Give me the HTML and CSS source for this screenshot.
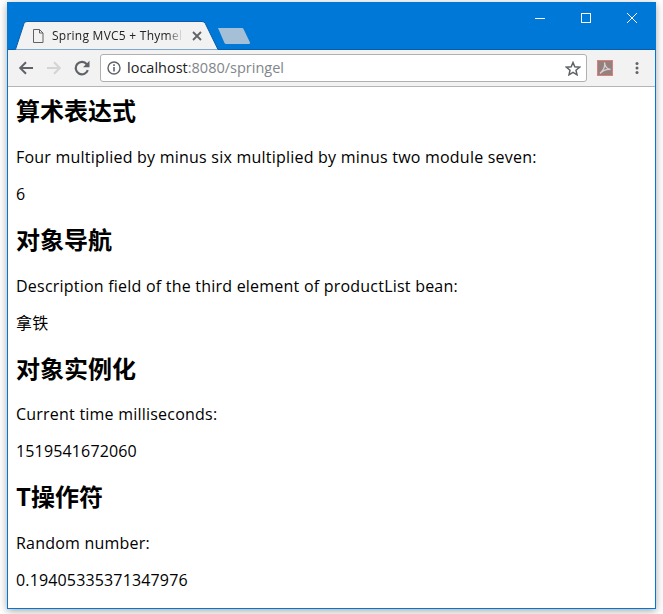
FILE: index.html
```html
<!DOCTYPE html>
<html lang="zh">
<head>
<meta charset="utf-8">
<title>Spring MVC5 + Thymeleaf</title>
<link rel="stylesheet" href="styles.css">
</head>
<body>
<div class="window">
  <div class="titlebar">
    <div class="tab">
      <svg class="tab-bg" width="204" height="29" viewBox="0 0 204 29"><path d="M0.500 28.500L9 2.500Q9.700 .5 12 .5H187Q189.500 .5 190.300 2.500L203 28.500" fill="#f2f2f2" stroke="#0a5da8"/></svg>
      <svg class="page-icon" width="12" height="14" viewBox="0 0 12 14"><path d="M1.500 .5H7.500L11 4V13.500H1.500Z M7.500 .5V4H11" fill="none" stroke="#5f6368"/></svg>
      <span class="tab-title">Spring MVC5 + Thymel</span>
      <svg class="tab-close" width="10" height="10" viewBox="0 0 10 10"><path d="M1 1L9 9M9 1L1 9" stroke="#5f6368" stroke-width="1.800"/></svg>
    </div>
    <svg class="new-tab" width="34" height="18" viewBox="0 0 34 18"><path d="M1 1H25Q26 1 26.500 2L33 15.500Q33 17 32 17H9Q8 17 7.500 16Z" fill="#a5bfd6"/></svg>
    <div class="controls">
      <svg width="12" height="12" viewBox="0 0 12 12"><path d="M1 6.500H11" stroke="#fff"/></svg>
      <svg width="12" height="12" viewBox="0 0 12 12"><rect x="1.500" y="1.500" width="9" height="9" fill="none" stroke="#fff"/></svg>
      <svg width="12" height="12" viewBox="0 0 12 12"><path d="M1 1L11 11M11 1L1 11" stroke="#fff"/></svg>
    </div>
  </div>
  <div class="toolbar">
    <svg class="nav" width="16" height="14" viewBox="0 0 16 14"><path d="M15 7H2.500M8 1.200L2.200 7L8 12.800" fill="none" stroke="#5f6368" stroke-width="2"/></svg>
    <svg class="nav" width="16" height="14" viewBox="0 0 16 14"><path d="M1 7H13.500M8 1.200L13.800 7L8 12.800" fill="none" stroke="#d4d4d4" stroke-width="2"/></svg>
    <svg class="nav reload" width="16" height="16" viewBox="0 0 16 16"><path d="M13.800 10.200A6.200 6.200 0 1 1 12.800 4.200" fill="none" stroke="#5f6368" stroke-width="2.200"/><path d="M15.500 .8V7.300H9Z" fill="#5f6368"/></svg>
    <div class="omnibox">
      <svg class="info" width="14" height="14" viewBox="0 0 14 14"><circle cx="7" cy="7" r="6" fill="none" stroke="#5f6368" stroke-width="1.400"/><path d="M7 6V10.500M7 3.300V5" stroke="#5f6368" stroke-width="1.600"/></svg>
      <span class="url">localhost<span class="url-dim">:8080/springel</span></span>
      <svg class="star" width="16" height="15" viewBox="0 0 16 15"><path d="M8 1.500L9.800 5.800L14.500 6.200L11 9.200L12 13.800L8 11.400L4 13.800L5 9.200L1.500 6.200L6.200 5.800Z" fill="none" stroke="#5f6368" stroke-width="1.500"/></svg>
    </div>
    <svg class="pdf" width="16" height="16" viewBox="0 0 16 16"><rect x=".5" y=".5" width="15" height="15" fill="#94807f" stroke="#dd8078"/><path d="M7.500 2.500C8.500 6 7 9.500 3 13.500C6 10.500 9 9 13.500 9.500C10 9 8 6.500 7.500 2.500Z" fill="none" stroke="#d8d0cf" stroke-width="1.300"/></svg>
    <svg class="menu" width="4" height="14" viewBox="0 0 4 14"><circle cx="2" cy="2.500" r="1.500" fill="#5f6368"/><circle cx="2" cy="7" r="1.500" fill="#5f6368"/><circle cx="2" cy="11.500" r="1.500" fill="#5f6368"/></svg>
  </div>
  <main class="content">
    <h2>算术表达式</h2>
    <p>Four multiplied by minus six multiplied by minus two module seven:</p>
    <p class="num">6</p>
    <h2>对象导航</h2>
    <p>Description field of the third element of productList bean:</p>
    <p>拿铁</p>
    <h2>对象实例化</h2>
    <p>Current time milliseconds:</p>
    <p class="num">1519541672060</p>
    <h2>T操作符</h2>
    <p>Random number:</p>
    <p class="num">0.19405335371347976</p>
  </main>
</div>
</body>
</html>
```
FILE: styles.css
```css
* { box-sizing: border-box; }
html, body { margin: 0; height: 614px; overflow: hidden; background: #fff; }
body { padding: 2px 7px 5px 7px; }
.window {
  height: 607px;
  display: flex;
  flex-direction: column;
  border: 1px solid #0078d7;
  border-top: 0;
  background: #fff;
  box-shadow: 0 2px 8px rgba(0,0,0,.35);
}
.titlebar {
  height: 48px;
  flex: none;
  background: #0078d7;
  border-bottom: 1px solid #0a5da8;
  display: flex;
  align-items: flex-end;
  position: relative;
}
.tab {
  width: 204px;
  height: 29px;
  margin: 0 0 -1px 7px;
  position: relative;
  display: flex;
  align-items: center;
  padding-left: 17px;
  flex: none;
}
.tab-bg { position: absolute; left: 0; top: 0; }
.page-icon, .tab-title, .tab-close { position: relative; flex: none; }
.tab-title {
  margin-left: 8px;
  font: 12px/16px "Open Sans", sans-serif;
  letter-spacing: .25px;
  color: #222;
  width: 131px;
  white-space: nowrap;
  overflow: hidden;
  -webkit-mask-image: linear-gradient(90deg, #000 88%, transparent);
  mask-image: linear-gradient(90deg, #000 88%, transparent);
}
.tab-close { margin-left: 9px; }
.new-tab { margin: 0 0 4px -2px; }
.controls {
  position: absolute;
  right: 17px;
  top: 10px;
  display: flex;
  gap: 34px;
}
.toolbar {
  height: 37px;
  flex: none;
  background: #f2f2f2;
  border-bottom: 1px solid #b5b5b5;
  display: flex;
  align-items: center;
  padding-left: 10px;
}
.nav { margin-right: 12px; flex: none; }
.reload { margin-right: 10px; }
.omnibox {
  width: 487px;
  height: 28px;
  background: #fff;
  border: 1px solid #b0b0b0;
  border-radius: 3px;
  display: flex;
  align-items: center;
  padding: 0 5px 0 6px;
  flex: none;
}
.info { flex: none; }
.url {
  margin-left: 6px;
  font: 14.500px/20px "Open Sans", sans-serif;
  color: #222;
  flex: 1;
}
.url-dim { color: #80868b; }
.pdf { margin-left: 10px; flex: none; }
.menu { margin-left: 22px; flex: none; }
.content {
  flex: 1;
  padding: 7.400px 9px 0 8px;
  font-family: "Open Sans", "Noto Sans CJK SC", sans-serif;
  color: #000;
  overflow: hidden;
}
h2 {
  margin: 18px 0 21.650px;
  font-size: 24px;
  line-height: 31px;
  font-weight: 700;
  font-family: "Noto Sans CJK SC", sans-serif;
}
h2:first-child { margin-top: 0; }
p {
  margin: 16px 0;
  font-size: 16px;
  line-height: 21px;
  letter-spacing: .22px;
  white-space: nowrap;
}
.num { letter-spacing: .15px; }
```
